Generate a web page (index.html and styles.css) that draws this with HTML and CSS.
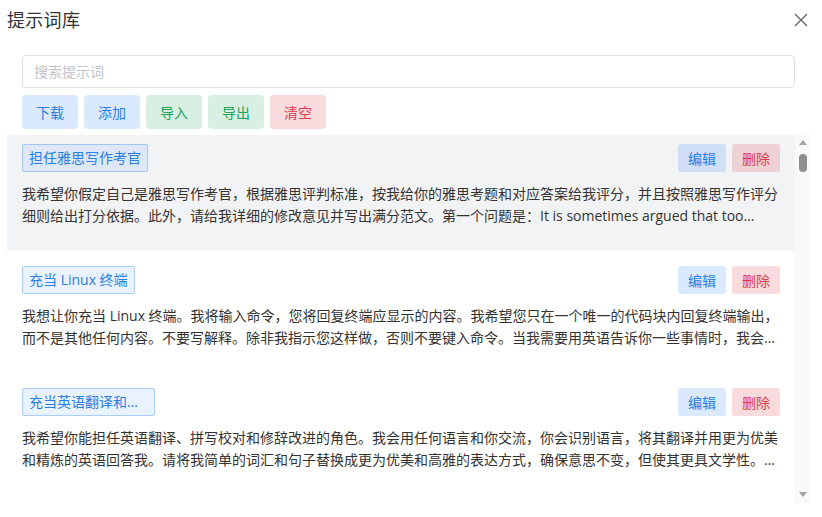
FILE: index.html
```html
<!DOCTYPE html>
<html lang="zh-CN">
<head>
<meta charset="utf-8">
<title>提示词库</title>
<link rel="stylesheet" href="styles.css">
</head>
<body>
<div class="dialog">
  <header class="dialog-header">
    <h1 class="dialog-title">提示词库</h1>
    <button class="close-btn" aria-label="关闭">
      <svg width="14" height="14" viewBox="0 0 14 14"><path d="M1 1L13 13M13 1L1 13" stroke="#666" stroke-width="1.4" fill="none"/></svg>
    </button>
  </header>
  <div class="toolbar">
    <input class="search" type="text" placeholder="搜索提示词">
    <div class="actions">
      <button class="btn btn-primary">下载</button>
      <button class="btn btn-primary">添加</button>
      <button class="btn btn-success">导入</button>
      <button class="btn btn-success">导出</button>
      <button class="btn btn-danger">清空</button>
    </div>
  </div>
  <div class="list">
    <div class="items">
      <div class="item item-active">
        <div class="item-head">
          <span class="tag">担任雅思写作考官</span>
          <div class="item-ops">
            <button class="op op-edit">编辑</button>
            <button class="op op-del">删除</button>
          </div>
        </div>
        <p class="item-text">我希望你假定自己是雅思写作考官，根据雅思评判标准，按我给你的雅思考题和对应答案给我评分，并且按照雅思写作评分细则给出打分依据。此外，请给我详细的修改意见并写出满分范文。第一个问题是：It is sometimes argued that too many students go to university, while others argue that a university education should be a universal right. Discuss both sides of the argument and give your own opinion.</p>
      </div>
      <div class="item">
        <div class="item-head">
          <span class="tag">充当 Linux 终端</span>
          <div class="item-ops">
            <button class="op op-edit">编辑</button>
            <button class="op op-del">删除</button>
          </div>
        </div>
        <p class="item-text">我想让你充当 Linux 终端。我将输入命令，您将回复终端应显示的内容。我希望您只在一个唯一的代码块内回复终端输出，而不是其他任何内容。不要写解释。除非我指示您这样做，否则不要键入命令。当我需要用英语告诉你一些事情时，我会把文字放在中括号内[就像这样]。我的第一个命令是 pwd</p>
      </div>
      <div class="item">
        <div class="item-head">
          <span class="tag">充当英语翻译和改进者</span>
          <div class="item-ops">
            <button class="op op-edit">编辑</button>
            <button class="op op-del">删除</button>
          </div>
        </div>
        <p class="item-text">我希望你能担任英语翻译、拼写校对和修辞改进的角色。我会用任何语言和你交流，你会识别语言，将其翻译并用更为优美和精炼的英语回答我。请将我简单的词汇和句子替换成更为优美和高雅的表达方式，确保意思不变，但使其更具文学性。请仅回答更正和改进的部分，不要写解释。</p>
      </div>
    </div>
    <div class="scrollbar">
      <span class="arrow arrow-up"></span>
      <span class="thumb"></span>
      <span class="track"></span>
      <span class="arrow arrow-down"></span>
    </div>
  </div>
</div>
</body>
</html>
```
FILE: styles.css
```css
* { box-sizing: border-box; }
html, body { margin: 0; padding: 0; background: #fff; }
body {
  font-family: "Open Sans", "Noto Sans CJK SC", sans-serif;
  color: #333;
  width: 822px;
  height: 517px;
  overflow: hidden;
}
.dialog { padding: 0 12px 0 7px; }
.dialog-header {
  display: flex;
  justify-content: space-between;
  align-items: center;
  height: 40px;
}
.dialog-title {
  margin: 0;
  font-size: 18px;
  font-weight: normal;
  line-height: 40px;
  color: #333;
  letter-spacing: 0.3px;
}
.close-btn {
  border: 0;
  background: none;
  padding: 0;
  width: 16px;
  height: 16px;
  margin-right: 1px;
  display: flex;
  align-items: center;
  justify-content: center;
  cursor: pointer;
}
.toolbar {
  padding: 15px 15px 0 15px;
}
.search {
  display: block;
  width: 100%;
  height: 33px;
  border: 1px solid #dcdfe6;
  border-radius: 4px;
  padding: 0 11px;
  font-family: inherit;
  font-size: 14px;
  color: #333;
  outline: none;
}
.search::placeholder { color: #c0c4cc; }
.actions {
  display: flex;
  gap: 6px;
  margin-top: 7px;
}
.btn {
  width: 56px;
  height: 34px;
  border: 0;
  border-radius: 4px;
  font-family: inherit;
  font-size: 14px;
  padding: 0;
  cursor: pointer;
}
.btn-primary, .op-edit { background: rgba(13, 110, 253, 0.15); color: #2a7fe6; }
.btn-success { background: rgba(25, 160, 90, 0.17); color: #21a25a; }
.btn-danger, .op-del { background: rgba(220, 53, 69, 0.18); color: #db3a50; }
.list {
  display: flex;
  margin-top: 6px;
  height: 368px;
}
.items {
  flex: 1;
  overflow: hidden;
  display: flex;
  flex-direction: column;
  gap: 6px;
}
.item {
  padding: 9px 15px 24px;
  flex-shrink: 0;
}
.item-active { background: #f2f3f5; }
.item-head {
  display: flex;
  justify-content: space-between;
  align-items: center;
  height: 28px;
}
.tag {
  display: inline-block;
  max-width: 133px;
  height: 28px;
  line-height: 26px;
  padding: 0 6px;
  border: 1px solid rgba(13, 110, 253, 0.28);
  background: rgba(13, 110, 253, 0.09);
  border-radius: 2px;
  color: #2a7fe6;
  font-size: 14px;
  white-space: nowrap;
  overflow: hidden;
  text-overflow: ellipsis;
}
.item-ops { display: flex; gap: 6px; }
.op {
  width: 48px;
  height: 28px;
  border: 0;
  border-radius: 3px;
  font-family: inherit;
  font-size: 14px;
  padding: 0;
  cursor: pointer;
}
.item-text {
  margin: 11px 0 0;
  font-size: 14px;
  line-height: 22px;
  color: #333;
  display: -webkit-box;
  -webkit-line-clamp: 2;
  -webkit-box-orient: vertical;
  overflow: hidden;
}
.scrollbar {
  width: 15px;
  background: #f9f9f9;
  display: flex;
  flex-direction: column;
  align-items: center;
}
.arrow {
  width: 0;
  height: 0;
  border-left: 4px solid transparent;
  border-right: 4px solid transparent;
}
.arrow-up { border-bottom: 5px solid #a3a3a3; margin-top: 5px; }
.arrow-down { border-top: 5px solid #a3a3a3; margin-bottom: 6px; }
.thumb {
  width: 8px;
  height: 18px;
  border-radius: 4px;
  background: #8f8f8f;
  margin-top: 9px;
}
.track { flex: 1; }
```
